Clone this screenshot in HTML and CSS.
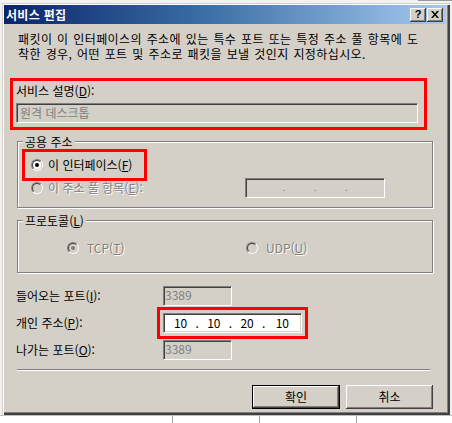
FILE: index.html
```html
<!DOCTYPE html>
<html lang="ko">
<head>
<meta charset="utf-8">
<title>서비스 편집</title>
<link rel="stylesheet" href="styles.css">
</head>
<body>
<div class="screen">
  <div class="topstrip"></div>
  <div class="dialog">
    <div class="titlebar">
      <span class="title">서비스 편집</span>
      <div class="tbtns">
        <span class="tbtn">?</span>
        <span class="tbtn"><svg width="8" height="7" viewBox="0 0 8 7"><path d="M0 0h2l2 2.4L6 0h2L5 3.5 8 7H6L4 4.6 2 7H0l3-3.5z" fill="#000"/></svg></span>
      </div>
    </div>
    <div class="content">
      <p class="desc"><span class="dline">패킷이 이 인터페이스의 주소에 있는 특수 포트 또는 특정 주소 풀 항목에 도</span><span class="dline">착한 경우, 어떤 포트 및 주소로 패킷을 보낼 것인지 지정하십시오.</span></p>

      <div class="desc-block mark">
        <div class="lbl">서비스 설명(<u>D</u>):</div>
        <div class="edit disabled wide">원격 데스크톱</div>
      </div>

      <fieldset class="group public">
        <legend>공용 주소</legend>
        <div class="opt-this mark">
          <span class="radio"><span class="radio-in"><span class="dot"></span></span></span>
          <span>이 인터페이스(<u>F</u>)</span>
        </div>
        <div class="opt-pool">
          <span class="pool-label">
            <span class="radio dis"><span class="radio-in"></span></span>
            <span class="gray">이 주소 풀 항목(<u>E</u>):</span>
          </span>
          <div class="edit disabled pool"><span>.</span><span>.</span><span>.</span></div>
        </div>
      </fieldset>

      <fieldset class="group proto">
        <legend>프로토콜(<u>L</u>)</legend>
        <div class="proto-row">
          <span class="proto-opt tcp">
            <span class="radio dis"><span class="radio-in"><span class="dot"></span></span></span>
            <span class="gray">TCP(<u>T</u>)</span>
          </span>
          <span class="proto-opt">
            <span class="radio dis"><span class="radio-in"></span></span>
            <span class="gray">UDP(<u>U</u>)</span>
          </span>
        </div>
      </fieldset>

      <div class="ports">
        <span class="plabel">들어오는 포트(<u>I</u>):</span>
        <div class="edit disabled port">3389</div>
        <span class="plabel">개인 주소(<u>P</u>):</span>
        <div class="edit ip mark-ip">
          <span class="seg"><span class="num">10</span><span class="sdot">.</span></span>
          <span class="seg"><span class="num">10</span><span class="sdot">.</span></span>
          <span class="seg"><span class="num">20</span><span class="sdot">.</span></span>
          <span class="seg"><span class="num">10</span></span>
        </div>
        <span class="plabel">나가는 포트(<u>O</u>):</span>
        <div class="edit disabled port">3389</div>
      </div>

      <div class="sep"></div>

      <div class="buttons">
        <button class="btn default" type="button"><span>확인</span></button>
        <button class="btn" type="button">취소</button>
      </div>
    </div>
  </div>
  <div class="under">
    <span class="ucol c1"></span><span class="ucol c2"></span><span class="ucol c3"></span>
  </div>
</div>
</body>
</html>
```
FILE: styles.css
```css
* { box-sizing: border-box; }
html, body { margin: 0; padding: 0; }
body {
  width: 452px; height: 423px; overflow: hidden; background: #fff;
  font-family: "Noto Sans CJK KR", "Noto Sans", sans-serif;
  font-size: 12px; line-height: 14px; color: #000;
}
u { text-decoration: underline; text-underline-offset: 1px; }

.screen { width: 452px; height: 423px; background: #f0f0f0; overflow: hidden; }
.topstrip { height: 3px; background: linear-gradient(90deg, #f2f2f2 0, #f2f2f2 418px, #9a9a9a 418px, #9a9a9a 452px); background-size: 100% 1px; background-repeat: no-repeat; background-color: #f2f2f2; }

.dialog {
  margin-left: 2px; width: 448px; height: 412px;
  background: #d4d0c8;
  padding: 2px 4px 2px 2px;
  box-shadow: inset 1px 1px 0 #d4d0c8, inset 2px 2px 0 #fff,
              inset -1px -1px 0 #404040, inset -2px -2px 0 #404040, inset -3px -3px 0 #808080;
}

.titlebar {
  height: 19px; display: flex; align-items: center; justify-content: space-between;
  padding: 0 3px 0 2px;
  background: linear-gradient(90deg, #0a246a 0%, #3a6ea5 45%, #a6caf0 100%);
}
.title { color: #fff; font-weight: bold; font-size: 12px; line-height: 14px; letter-spacing: 0.3px; }
.tbtns { display: flex; gap: 1px; }
.tbtn {
  width: 16px; height: 14px; background: #d4d0c8;
  display: flex; align-items: center; justify-content: center;
  font: bold 11px/1 "Liberation Sans", sans-serif; color: #000;
  box-shadow: inset -1px -1px 0 #404040, inset 1px 1px 0 #fff, inset -2px -2px 0 #808080;
}

.desc { margin: 8px 0 0 14px; white-space: nowrap; word-spacing: 1px; letter-spacing: 0.4px; }
.dline { display: block; height: 15px; line-height: 13px; }

.mark { outline: 3px solid #ff0000; }
.mark-ip { outline: 3px solid #ff0000; outline-offset: 3px; }

.desc-block { margin: 19px 0 0 9px; width: 411px; padding: 3px 0 4px 3px; }
.lbl { height: 14px; margin-top: 0; margin-bottom: 5px; }

.edit {
  height: 20px; background: #fff;
  border: 1px solid; border-color: #808080 #fff #fff #808080;
  box-shadow: inset 1px 1px 0 #404040, inset -1px -1px 0 #d4d0c8;
  padding: 2px 3px; line-height: 14px; white-space: nowrap;
}
.edit.disabled { background: #d4d0c8; color: #808080; }
.edit.wide { width: 402px; }

.group {
  margin: 7px 0 0 13px; width: 416px; min-inline-size: 0;
  border: 1px solid #808080;
  box-shadow: inset 1px 1px 0 #fff, 1px 1px 0 #fff;
}
.group legend { margin-left: 5px; padding: 0 2px; line-height: 15px; background: #d4d0c8; }
.public { padding: 3px 0 9px 0; }
.proto { margin-top: 5px; padding: 10px 0 14px 0; }

.gray { color: #808080; text-shadow: 1px 1px 0 #fff; }

.radio {
  width: 12px; height: 12px; border-radius: 50%; flex: none;
  border: 1px solid; border-color: #808080 #fff #fff #808080;
  display: flex;
}
.radio-in {
  flex: 1; border-radius: 50%; background: #fff;
  border: 1px solid; border-color: #404040 #d4d0c8 #d4d0c8 #404040;
  display: flex; align-items: center; justify-content: center;
}
.dot { width: 4px; height: 4px; border-radius: 50%; background: #000; }
.radio.dis .radio-in { background: #d4d0c8; }
.radio.dis .dot { background: #808080; }

.opt-this { margin-left: 7px; width: 119px; height: 26px; display: flex; align-items: center; padding-left: 6px; gap: 5px; }
.opt-pool { height: 20px; display: flex; align-items: center; padding-left: 13px; }
.pool-label { width: 214px; display: flex; align-items: center; gap: 5px; }
.edit.pool { width: 140px; display: flex; justify-content: space-around; padding: 3px 22px 0 22px; color: #808080; font-size: 9px; line-height: 12px; }

.proto-row { height: 20px; display: flex; align-items: center; padding-left: 49px; }
.proto-opt { display: flex; align-items: center; gap: 8px; }
.proto-opt.tcp { width: 179px; }

.ports { margin: 13px 0 0 12px; display: grid; grid-template-columns: 147px auto; row-gap: 7px; align-items: center; justify-items: start; }
.edit.port { width: 69px; padding: 1px 1px; }
.edit.ip { width: 139px; display: flex; padding: 2px 2px; }
.seg { flex: 1; display: flex; }
.num { flex: 1; text-align: center; }
.sdot { width: 4px; text-align: center; }

.sep { margin: 9px 0 0 13px; width: 413px; height: 2px; border-top: 1px solid #808080; border-bottom: 1px solid #fff; }

.buttons { margin: 14px 0 0 248px; display: flex; gap: 6px; }
.btn {
  width: 87px; height: 24px; padding: 0; margin: 0; border: 0;
  font: inherit; font-size: 12px; color: #000; background: #d4d0c8;
  box-shadow: inset -1px -1px 0 #404040, inset 1px 1px 0 #fff, inset -2px -2px 0 #808080;
}
.btn.default {
  width: 88px; border: 1px solid #000;
  box-shadow: inset -1px -1px 0 #404040, inset 1px 1px 0 #fff, inset -2px -2px 0 #808080;
}

.under { height: 8px; background: #fff; display: flex; border-top: 1px solid #c0c0c0; }
.ucol { height: 100%; border-right: 1px solid #a0a0a0; }
.c1 { width: 173px; }
.c2 { width: 87px; }
.c3 { width: 97px; }
```
